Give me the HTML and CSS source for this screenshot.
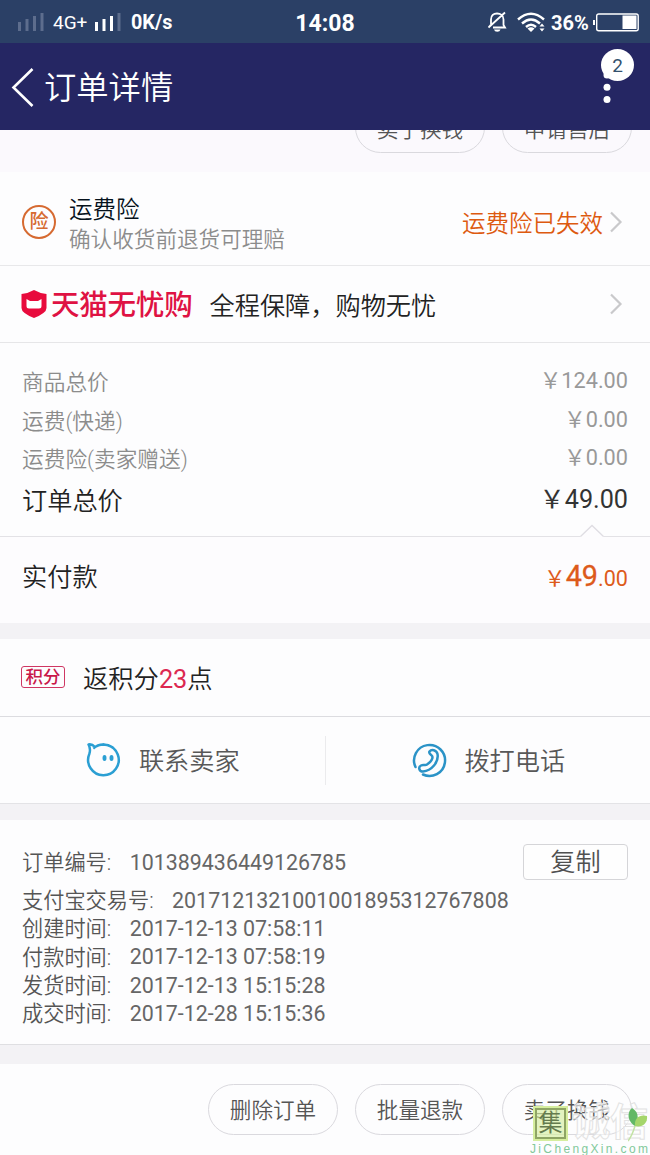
FILE: index.html
```html
<!DOCTYPE html>
<html lang="zh-CN">
<head>
<meta charset="utf-8">
<title>订单详情</title>
<link rel="stylesheet" href="styles.css">
</head>
<body>
<div class="screen">
  <header class="status">
    <svg class="sig-off" width="26" height="20" viewBox="0 0 26 20"><path d="M1.500 10v9M9 7v12M16.500 4v15M24 1v18" stroke="#5d6d8d" stroke-width="3" fill="none"/></svg>
    <span class="net">4G+</span>
    <svg class="sig-on" width="26" height="20" viewBox="0 0 26 20"><path d="M1.500 10v9M9 7v12M16.500 4v15" stroke="#fff" stroke-width="3" fill="none"/><path d="M24 1v18" stroke="#5d6d8d" stroke-width="3"/></svg>
    <span class="speed">0K/s</span>
    <span class="clock">14:08</span>
    <svg class="bell" width="20" height="22" viewBox="0 0 20 22" fill="none" stroke="#fff" stroke-width="1.800"><path d="M4 13V8.500C4 4.500 6.500 2.500 10 2.500S16.500 4.500 16.500 8.500V14l1.500 2.500H6M1.500 16.500L18 1.500M1.500 16.500l2.500-3"/><path d="M7 18.500h6.500a3.300 2.700 0 0 1-6.500 0z" fill="#fff" stroke="none"/></svg>
    <svg class="wifi" width="29" height="21" viewBox="0 0 29 21"><g fill="none" stroke="#fff" stroke-width="2.400"><path d="M1 7.500Q14 -4 27 7.500M5 11.500Q14 3.500 23 11.500M9 15Q14 10.500 19 15"/></g><path d="M10.500 16.500Q14 14 17.500 16.500L14 20zM22.500 14.500l2.500-3 2.500 3zM22.500 16.500l2.500 3 2.500-3z" fill="#fff"/></svg>
    <span class="percent">36%</span>
    <svg class="battery" width="46" height="19" viewBox="0 0 46 19"><path d="M1 7v5" stroke="#fff" stroke-width="2"/><rect x="3.700" y="1" width="41.500" height="16.800" rx="2" fill="none" stroke="#fff" stroke-width="1.400"/><rect x="29.500" y="2.500" width="14" height="13.500" fill="#fff"/></svg>
  </header>
  <nav class="bar">
    <svg class="back" width="24" height="40" viewBox="0 0 24 40"><path d="M21.500 2L2.500 20.500l19 18.500" fill="none" stroke="#fff" stroke-width="2.600"/></svg>
    <h1 class="title">订单详情</h1>
    <svg class="more" width="8" height="34" viewBox="0 0 8 34" fill="#fff"><circle cx="4" cy="5" r="3.500"/><circle cx="4" cy="17.200" r="3.500"/><circle cx="4" cy="29.400" r="3.500"/></svg>
    <span class="badge">2</span>
  </nav>
  <main>
    <section class="cut"><span class="pill">卖了换钱</span><span class="pill">申请售后</span></section>
    <section class="insurance">
      <span class="seal">险</span>
      <div class="ins-text"><div class="ins-name">运费险</div><div class="ins-note">确认收货前退货可理赔</div></div>
      <span class="ins-state">运费险已失效</span>
      <svg class="chev" width="14" height="22" viewBox="0 0 14 22"><path d="M2 1.500l9.500 9.500L2 20.500" fill="none" stroke="#c9c9cb" stroke-width="2.200"/></svg>
    </section>
    <section class="assure">
      <svg class="shield" width="26" height="28" viewBox="0 0 26 28"><path d="M13 0Q18 3 25.500 4V18Q25.500 23 13 28Q.5 23 .5 18V4Q8 3 13 0z" fill="#e80b3d"/><path d="M5.500 9l3.500 2h8l3.500-2V16q0 2.500-2.500 2.500h-10q-2.500 0-2.500-2.500z" fill="#fff"/></svg>
      <b class="brand">天猫无忧购</b>
      <span class="promise">全程保障，购物无忧</span>
      <svg class="chev" width="14" height="22" viewBox="0 0 14 22"><path d="M2 1.500l9.500 9.500L2 20.500" fill="none" stroke="#c9c9cb" stroke-width="2.200"/></svg>
    </section>
    <section class="prices">
      <div class="row"><span class="cjk">商品总价</span><span class="amt">￥124.00</span></div>
      <div class="row"><span class="cjk">运费(快递)</span><span class="amt">￥0.00</span></div>
      <div class="row"><span class="cjk">运费险(卖家赠送)</span><span class="amt">￥0.00</span></div>
      <div class="row total"><span class="cjk">订单总价</span><span class="amt">￥49.00</span></div>
      <svg class="notch" width="24" height="14" viewBox="0 0 24 14"><path d="M.5 12.500L12 1.500l11.500 11V14H.5z" fill="#fdfcfe"/><path d="M.5 12.500L12 1.500l11.500 11" fill="none" stroke="#dfdde3" stroke-width="1.300"/></svg>
    </section>
    <section class="paid"><span class="cjk paid-label">实付款</span><span class="sum">￥<span class="big">49</span>.00</span></section>
    <section class="points"><span class="tag">积分</span><span class="pts"><span class="cjk">返积分</span><em>23</em><span class="cjk">点</span></span></section>
    <section class="contact">
      <div class="cell">
        <svg width="36" height="36" viewBox="0 0 36 36"><path d="M3.300 12A15.300 15.300 0 1 0 7.200 6.500M3.300 12Q5 7 2.500 2.500Q6 1.800 9 5Q18-.2 27 5.500" fill="none" stroke="#2b9fd3" stroke-width="2.500" stroke-linejoin="round"/><ellipse cx="18.500" cy="16" rx="2" ry="3" fill="#2b9fd3"/><ellipse cx="25.500" cy="16" rx="2" ry="3" fill="#2b9fd3"/></svg>
        <span class="cjk">联系卖家</span>
      </div>
      <div class="cell">
        <svg width="36" height="36" viewBox="0 0 36 36" fill="none" stroke="#2b93c7" stroke-width="2.500" stroke-linecap="round"><path d="M4.500 25A15.500 15.500 0 1 1 12 32.500"/><path d="M18.500 9.500C20.500 7 25.500 8 26.500 12C28 20 20.500 29 12 29.500C8 29.500 7 25 10 23.500C13 22 14 24 16 22.500C19 20.500 21.500 18 21.500 15C21.500 13 17 12 18.500 9.500z"/></svg>
        <span class="cjk">拨打电话</span>
      </div>
    </section>
    <section class="info">
      <div class="line first"><span class="k">订单编号:</span><span>101389436449126785</span><button class="copy">复制</button></div>
      <div class="line"><span class="k">支付宝交易号:</span><span>2017121321001001895312767808</span></div>
      <div class="line"><span class="k">创建时间:</span><span>2017-12-13 07:58:11</span></div>
      <div class="line"><span class="k">付款时间:</span><span>2017-12-13 07:58:19</span></div>
      <div class="line"><span class="k">发货时间:</span><span>2017-12-13 15:15:28</span></div>
      <div class="line"><span class="k">成交时间:</span><span>2017-12-28 15:15:36</span></div>
    </section>
  </main>
  <footer class="actions"><span class="pill">删除订单</span><span class="pill">批量退款</span><span class="pill">卖了换钱</span></footer>
  <div class="mark">
    <span class="mark-box">集</span>
    <span class="mark-name">诚信</span>
    <svg class="leaf" width="20" height="34" viewBox="0 0 20 34"><path d="M7 18C-1 13 -1 4 4 0C11 4 11 11 7 18z" fill="#62b866"/><path d="M7 18C6 10 12 6 19 8C20 15 14 20 7 18z" fill="#a5d66b"/><path d="M7 18Q4 28 0 33" fill="none" stroke="#c3e3a4" stroke-width="1.500"/></svg>
    <span class="mark-url">JiChengXin.com</span>
  </div>
</div>
</body>
</html>
```

FILE: styles.css
```css
* { box-sizing: border-box; }
body { margin: 0; font-family: Roboto, "Noto Sans CJK SC", sans-serif; color: #333; }
svg { display: block; flex: none; }
.cjk, .k, .pill, .ins-name, .ins-note, .ins-state, .promise, .copy { font-weight: 350; }
.screen { position: relative; width: 650px; height: 1155px; overflow: hidden; display: flex; flex-direction: column; background: #fdfdfe; white-space: nowrap; }
.status { position: relative; height: 43px; flex: none; display: flex; align-items: center; background: #2b4066; color: #fff; padding: 1px 11px 0 18px; }
.net { margin-left: 9px; width: 42px; font-size: 19px; }
.speed { margin-left: 10px; font-size: 19.8px; line-height: 24px; padding-top: 1px; font-weight: 700; }
.clock { position: absolute; left: 0; right: 0; padding-top: 2px; text-align: center; font-size: 23px; font-weight: 700; }
.bell { margin-left: auto; }
.wifi { margin-left: 10px; }
.percent { margin-left: 5px; padding-top: 1px; font-size: 20px; font-weight: 700; width: 38px; }
.battery { margin-left: 4px; }
.bar { position: relative; height: 87px; flex: none; display: flex; align-items: center; background: #252663; color: #fff; padding: 0 39px 0 11px; }
.title { margin: 0 0 0 9px; padding-top: 2px; font-size: 32.3px; line-height: 46px; font-weight: 350; }
.more { margin-left: auto; }
.badge { position: absolute; right: 16px; top: 6px; width: 33px; height: 32px; border-radius: 50%; background: #fff; color: #34516d; font-size: 19px; line-height: 33px; text-align: center; }
.pill { width: 130px; height: 51px; border: 1px solid #dad9de; border-radius: 26px; font-size: 21.6px; line-height: 51px; text-align: center; color: #555; }
.cut { height: 42px; overflow: hidden; display: flex; justify-content: flex-end; align-items: flex-end; gap: 17px; padding: 0 18px 19px; background: #fbf9fd; }
.cut .pill { flex: none; line-height: 53px; }
.insurance { height: 94px; display: flex; align-items: center; padding: 6px 27px 0 22px; border-bottom: 1px solid #e8e8ea; }
.seal { width: 34px; height: 34px; border: 2px solid #d66a31; border-radius: 50%; color: #d66a31; font-size: 19px; line-height: 29px; text-align: center; font-weight: 500; }
.ins-text { margin-left: 13px; padding-top: 5px; }
.ins-name { font-size: 23.5px; line-height: 31px; color: #06121c; }
.ins-note { font-size: 21.6px; line-height: 28px; color: #8c8c8c; }
.ins-state { margin-left: auto; font-size: 23.5px; color: #dd5a10; }
.chev { margin-left: 6px; }
.assure { height: 77px; display: flex; align-items: center; padding: 0 27px 0 21px; border-bottom: 1px solid #e6e6e8; }
.brand { margin-left: 4px; padding-top: 4px; font-size: 28.5px; line-height: 40px; letter-spacing: -.2px; font-weight: 500; color: #df1243; }
.promise { margin-left: 17px; font-size: 25.2px; color: #222; }
.assure .chev { margin-left: auto; }
.prices { position: relative; height: 194px; padding: 20px 22px 0; border-bottom: 1px solid #e3e2e6; }
.row { display: flex; justify-content: space-between; height: 38.6px; line-height: 40px; font-size: 21.7px; color: #999; }
.row .cjk { color: #8c8c8c; }
.row .amt { margin-top: -2px; }
.total { height: 42px; line-height: 46px; font-size: 25.2px; color: #333; }
.total .cjk { color: #222; }
.notch { position: absolute; right: 46px; bottom: -2px; }
.paid { height: 102px; display: flex; align-items: flex-start; justify-content: space-between; padding: 17px 22px 0; font-size: 25.2px; line-height: 44px; border-bottom: 16px solid #f3f2f5; background: #fdfcfe; }
.paid-label { padding-top: 2px; color: #222; }
.sum { font-size: 21.6px; color: #dd5a1b; }
.big { font-size: 28.8px; -webkit-text-stroke: .3px #dd5a1b; }
.points { height: 78px; display: flex; align-items: center; padding: 0 21px 1px; border-bottom: 1px solid #dcdce0; }
.tag { width: 44px; height: 22px; border: 1px solid #cf3763; border-radius: 3px; font-size: 17.5px; line-height: 20px; text-align: center; color: #c9184a; font-weight: 500; }
.pts { margin-left: 18px; font-size: 25.3px; color: #222; }
.pts em { font-style: normal; color: #dc2850; }
.contact { height: 87px; display: flex; border-bottom: 1px solid #e3e3e6; }
.cell { flex: 1; display: flex; align-items: center; justify-content: center; gap: 17px; padding: 0 0 1px 1px; font-size: 25.2px; color: #585858; }
.cell .cjk { padding-bottom: 2px; }
.cell + .cell { position: relative; padding-left: 2px; }
.cell + .cell::before { content: ""; position: absolute; left: 0; top: 19px; height: 49px; border-left: 1px solid #ebebed; }
.info { height: 241px; padding: 23px 22px 0; border-top: 16px solid #f3f2f5; border-bottom: 1px solid #dfdfe2; font-size: 21.4px; color: #666; }
.line { display: flex; align-items: center; height: 28.3px; }
.k { margin-right: 18.5px; padding-bottom: 3px; font-size: 21.2px; color: #555; }
.first { height: 37px; margin-bottom: 6px; padding-top: 1px; }
.copy { margin-left: auto; width: 105px; height: 36px; padding: 2px 0 0; border: 1px solid #d5d5d8; border-radius: 4px; background: #fefefe; font-family: inherit; font-size: 25.2px; line-height: 32px; color: #505050; }
.actions { height: 110px; flex: none; display: flex; justify-content: flex-end; gap: 17px; padding: 20px 18px 0; border-top: 19px solid #f3f2f5; }
main { height: 915px; flex: none; }
.mark { position: absolute; left: 530px; top: 1106px; width: 120px; height: 49px; }
.mark-box { position: absolute; left: 5px; top: 2px; width: 31px; height: 31px; border: 2px solid #8fa565; outline: 2px solid #d6ee9e; background: rgba(214,238,158,.65); color: #657b4e; font-size: 24px; line-height: 26px; text-align: center; }
.mark-name { position: absolute; left: 42px; top: -3px; font-size: 38px; line-height: 38px; font-weight: 700; color: rgba(255,255,255,.6); -webkit-text-stroke: 1px #e2e2e2; }
.leaf { position: absolute; left: 98px; top: 2px; }
.mark-url { position: absolute; left: 0; top: 36px; font-family: "Liberation Sans", sans-serif; font-size: 12px; line-height: 14px; letter-spacing: 2.35px; color: #82c99b; }
```
